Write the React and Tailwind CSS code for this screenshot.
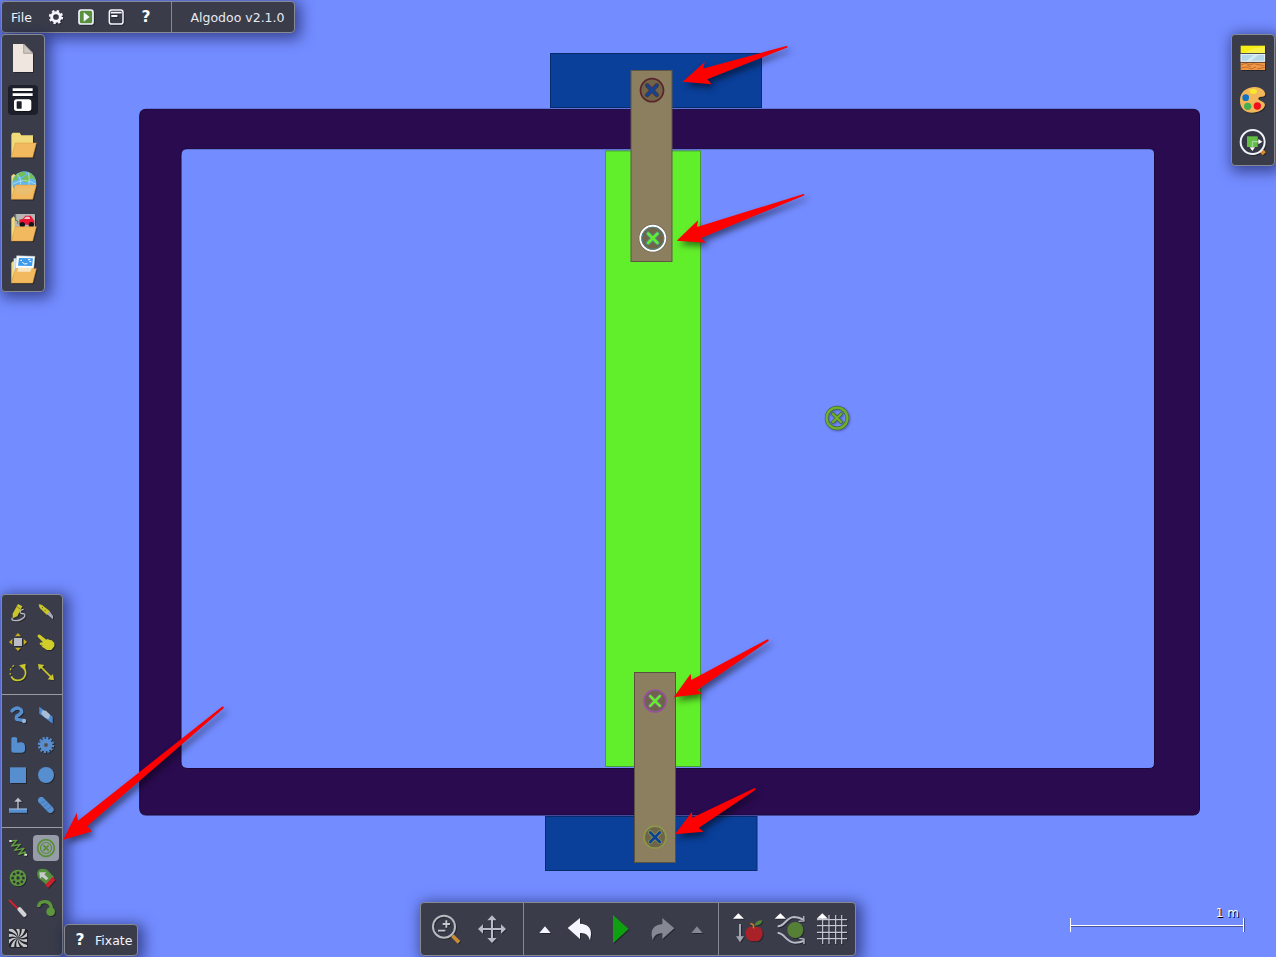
import React from 'react';

const panel =
  'absolute rounded-[4px] border border-[#868991] bg-[#3a3d49] shadow-[3px_3px_14px_3px_rgba(20,25,80,0.6)]';

function Icon({ box, w, h, flat, children }) {
  return (
    <svg
      width={w}
      height={h}
      viewBox={box}
      className={flat ? 'block shrink-0' : 'block shrink-0 drop-shadow-[1px_1px_0.5px_rgba(0,0,0,0.35)]'}
    >
      {children}
    </svg>
  );
}

function Screw({ x, y, r, ring, edge, fill, cross, size = 5, halo, ringWidth = 1.7 }) {
  const d = `M${x - size} ${y - size}L${x + size} ${y + size}M${x + size} ${y - size}L${x - size} ${y + size}`;
  return (
    <g>
      {edge && <circle cx={x} cy={y} r={r + 1} fill="none" stroke={edge} strokeWidth="1.4" />}
      <circle cx={x} cy={y} r={r} fill={fill} stroke={ring} strokeWidth={ringWidth} />
      <path d={d} stroke={halo} strokeWidth="4.4" strokeLinecap="round" />
      <path d={d} stroke={cross} strokeWidth="2.6" strokeLinecap="round" />
    </g>
  );
}

function Scene() {
  return (
    <svg className="absolute inset-0" width="1276" height="957" viewBox="0 0 1276 957" fill="none">
      <rect x="550.5" y="53.5" width="211" height="54" fill="#0a3f9a" stroke="#072c6d" />
      <rect x="545.5" y="816.5" width="211.5" height="54" fill="#0a3f9a" stroke="#072c6d" />
      <path
        fillRule="evenodd"
        fill="#2a0b50"
        stroke="#1c0838"
        d="M146 109.300H1193Q1199.500 109.300 1199.500 116V808Q1199.500 815 1193 815H146Q139.700 815 139.700 808V116Q139.700 109.300 146 109.300ZM187 148.700Q181 149 181 155V762Q181 768.500 188 768.500H1149Q1154.500 768.500 1154.500 763V154Q1154.500 148.700 1149 148.700Z"
      />
      <rect x="605.5" y="150.900" width="95" height="615.600" fill="#62ef2b" stroke="#459c33" />
      <rect x="631" y="70.500" width="41" height="191" fill="#8c7f5f" stroke="#5f5744" />
      <rect x="634.5" y="672.500" width="41" height="190" fill="#8c7f5f" stroke="#5a5241" />
      <Screw x={652} y={90.200} r={11.5} ring="#58262a" fill="#716448" cross="#154396" halo="#493440" size={4.8} />
      <Screw x={652.800} y={238.300} r={12.5} ring="#fff" edge="#706958" fill="#716448" cross="#62ef2b" halo="#539090" size={4.6} ringWidth={1.9} />
      <circle cx="652.8" cy="238.3" r="11" stroke="#4d898c" />
      <Screw x={655} y={701} r={11} ring="#94549c" fill="#6e624b" cross="#62ef2b" halo="#8b5b8d" size={4.8} />
      <Screw x={655} y={837.200} r={11} ring="#8c964c" fill="#6e644b" cross="#0a3f9a" halo="#84904b" size={4.8} />
      <g className="drop-shadow-[1px_1px_1px_rgba(20,25,80,0.4)]">
        <circle cx="837" cy="418" r="10.4" stroke="#466936" strokeWidth="3.600" />
        <circle cx="837" cy="418" r="10.4" stroke="#70b02d" strokeWidth="2.3" />
        <path d="m833 414 8 8m0-8-8 8" stroke="#466936" strokeWidth="3.8" strokeLinecap="round" />
        <path d="m833 414 8 8m0-8-8 8" stroke="#70b02d" strokeWidth="2.2" strokeLinecap="round" />
      </g>
    </svg>
  );
}

function Arrows() {
  return (
    <svg className="pointer-events-none absolute inset-0" width="1276" height="957" viewBox="0 0 1276 957" fill="#fe0000">
      <g className="drop-shadow-[3px_4px_3px_rgba(0,0,0,0.5)]">
        <path d="M682.700 81.700 704.700 62 703.300 68.400 786.300 46Q788.500 46 787.200 47.600L707.300 79.300 711.700 84.300Z" />
        <path d="M676.700 240.700 698 220.300 697 227 803.500 194Q805 194.300 804 195.400L701.300 238 705.700 242.700Z" />
        <path d="M673.700 697.300 690.700 673.700 691.300 680 767.500 639.300Q769.300 639.500 768.400 641L697.300 690 702 693.700Z" />
        <path d="M675 834.300 692 811.700 692.300 817.700 754.700 788Q756 788.500 755.500 789.700L698.700 828 703.700 831.700Z" />
        <path d="M63.300 839.700 76.700 813 78 820.700 222.300 706.500Q224.500 706.500 223.600 708.300L87.300 826 91.700 831.500Z" />
      </g>
    </svg>
  );
}

function FolderFront({ y }) {
  return <path d={`M46 ${y}H109L98 ${y + 43}H34Z`} fill="#f3b95e" stroke="#d99b43" strokeWidth="1.500" />;
}

function TopBar() {
  return (
    <header className={`${panel} left-px top-px flex h-8 w-[294px] items-stretch`}>
      <div className="flex w-[170px] items-center border-r border-[#868991] pl-[9px] text-[#f2f3fb]">
        <span className="w-[37px] pt-[2px] text-[12.5px]">File</span>
        <Icon box="144 24 48 54" w={16} h={18}>
          <circle cx="168" cy="51" r="13" fill="none" stroke="#f4f5ff" strokeWidth="9" />
          <circle cx="168" cy="51" r="18" fill="none" stroke="#f4f5ff" strokeWidth="7" strokeDasharray="7 7.137" />
        </Icon>
        <div className="w-[14px]" />
        <Icon box="234 24 48 54" w={16} h={18}>
          <rect x="237" y="30" width="42" height="42" rx="7" fill="#58903d" stroke="#f4f5ff" strokeWidth="5" />
          <path d="M251 37V65L269 51Z" fill="#f4f5ff" />
        </Icon>
        <div className="w-[14px]" />
        <Icon box="324 24 48 54" w={16} h={18}>
          <rect x="328" y="30" width="41" height="42" rx="7" fill="none" stroke="#f4f5ff" strokeWidth="4.500" />
          <path d="M332 38H365M334 48H352" stroke="#f4f5ff" strokeWidth="5.500" />
        </Icon>
        <div className="w-[14px]" />
        <span className="w-4 pt-px text-center text-[15.500px] font-bold text-white">?</span>
      </div>
      <div className="flex flex-1 items-center justify-center pl-[9px] pt-[2px] text-[12.500px] text-[#e9eaf3]">Algodoo v2.1.0</div>
    </header>
  );
}

function FileBar() {
  return (
    <nav className={`${panel} left-px top-[34px] flex h-[258px] w-11 flex-col items-center pt-[5px]`}>
      <Icon box="24 30 90 108" w={30} h={36}>
        <path d="M39 42H72L99 70V126H39Z" fill="#eee6df" />
        <path d="M71 42V70H99Z" fill="#cec6c1" stroke="#8e8985" strokeWidth="2" />
      </Icon>
      <div className="mt-[9px] flex h-[30px] w-[30px] items-center justify-center rounded-[4px] bg-[#1d202a]">
        <Icon box="24 165 90 90" w={30} h={30}>
          <path d="M38 179H98M38 194H98" stroke="#fff" strokeWidth="8" />
          <rect x="42" y="208" width="52" height="35" rx="8" fill="#fff" />
          <rect x="50" y="214" width="15" height="22" rx="2" fill="#1d202a" />
        </Icon>
      </div>
      <div className="mt-[11px] flex flex-col">
        <Icon box="24 287 90 126" w={30} h={42}>
          <path d="M34 380V313L38 307H59L64 315H99V345L85 380Z" fill="#f1da79" />
          <FolderFront y={338} />
        </Icon>
        <Icon box="24 413 90 126" w={30} h={42}>
          <path d="M34 506V437L40 431 60 440V470Z" fill="#f1da79" />
          <circle cx="73" cy="459" r="36" fill="#62b7ee" />
          <path d="M39 449Q49 424 72 424L80 431 67 438 54 441 49 452ZM83 424Q100 431 107 449L94 445ZM66 443 83 433 94 441 84 456 70 456Z" fill="#75bd55" />
          <path d="M38 462Q73 439 108 462M52 432Q66 448 60 466M86 427Q89 446 87 466" fill="none" stroke="#c9e9fa" strokeWidth="2" />
          <FolderFront y={464} />
          <path d="M44 468Q73 482 102 467L96 486Q73 501 48 489Z" fill="#e5c17c" opacity=".6" />
        </Icon>
        <Icon box="24 539 90 126" w={30} h={42}>
          <path d="M34 632V565L40 558 50 568V590Z" fill="#f1da79" />
          <rect x="44" y="551" width="61" height="45" rx="3" fill="#b7b7b5" />
          <path d="M47 552V571Q56 569 53 580" fill="none" stroke="#477843" strokeWidth="3" />
          <path d="M58 568 69 565 76 556H92L103 571V583H58Z" fill="#e91734" />
          <path d="M77 559H88L91 566H72Z" fill="#f5c4ce" />
          <circle cx="67" cy="583" r="8" fill="#14151a" />
          <circle cx="94" cy="583" r="8" fill="#14151a" />
          <FolderFront y={589} />
        </Icon>
        <Icon box="24 665 90 126" w={30} h={42}>
          <path d="M34 758V698L39 692 45 697V725Z" fill="#f1da79" />
          <path d="M41 684H95V725H41Z" fill="#dce6ed" />
          <path d="M50 676 105 678 101 716 46 714Z" fill="#f8fcff" stroke="#a8b7c3" strokeWidth="1.500" />
          <path d="M57 683 99 684 96 707 54 706Z" fill="#3d9bed" />
          <path d="M61 690H66M84 688H91M88 694H94M67 695 73 701 82 700" fill="none" stroke="#fff" strokeWidth="3" />
          <FolderFront y={715} />
          <path d="M54 712H96L91 724H52Z" fill="#f8e4bf" />
        </Icon>
      </div>
    </nav>
  );
}

function OptionsBar() {
  return (
    <nav className={`${panel} left-[1231px] top-[34px] flex h-[132px] w-11 flex-col items-center pt-[2px]`}>
      <Icon box="66 36 90 126" w={30} h={42}>
        <rect x="74" y="62" width="73" height="22" fill="#f7ee16" />
        <path d="M85 84 112 70 147 66V84Z" fill="#f9f14a" />
        <rect x="75" y="88" width="71" height="21" fill="#b3d6e8" stroke="#f6fbff" strokeWidth="3" />
        <path d="M91 108 114 89H128L105 108Z" fill="#d4e9f2" />
        <rect x="74" y="113" width="73" height="22" fill="#f19743" />
        <path d="M75 120 88 115 101 119 115 116M75 129 92 126 105 132 120 126M118 117 143 122M123 132 146 127M94 121 105 125" fill="none" stroke="#a35a27" strokeWidth="2" />
      </Icon>
      <Icon box="66 162 90 126" w={30} h={42}>
        <path d="M113 186C138 184 151 202 147 211C143 218 128 213 127 221C127 227 147 229 147 240C144 254 127 263 108 263C84 263 71 247 72 225C73 202 89 188 113 186Z" fill="#f2b65b" />
        <ellipse cx="112" cy="199" rx="11" ry="8" fill="#f8e82f" />
        <circle cx="89" cy="218" r="10" fill="#1171c4" />
        <circle cx="95" cy="244" r="11" fill="#45ad52" />
        <circle cx="124" cy="243" r="11" fill="#f10f1c" />
      </Icon>
      <Icon box="66 287 90 126" w={30} h={42}>
        <path d="m132 372 13 13" stroke="#dc8a27" strokeWidth="13" />
        <circle cx="110" cy="350" r="36" fill="#343743" stroke="#eff2f8" strokeWidth="6" />
        <rect x="93" y="333" width="32" height="32" fill="#62bf43" />
        <path d="M109 365V349H130" fill="none" stroke="#b9d6b7" strokeWidth="3" />
        <path d="M127 341V357L139 349ZM101 366H117L109 377Z" fill="#fff" />
      </Icon>
    </nav>
  );
}

function Tool({ box, active, children }) {
  return (
    <div className="flex h-[30px] w-7 items-center justify-center">
      <div className={active ? 'flex h-[26px] w-[26px] items-center justify-center rounded-[4px] bg-[#989ba8]' : 'flex'}>
        <Icon box={box} w={28} h={30} flat={active}>{children}</Icon>
      </div>
    </div>
  );
}

function ToolBox() {
  const group = 'grid grid-cols-2 px-[2px]';
  return (
    <aside className={`${panel} left-px top-[594px] flex h-[362px] w-[62px] flex-col`}>
      <div className={`${group} h-[100px] content-start border-b border-[#9a9ca3] pt-[2px]`}>
        <Tool box="12 36 84 90">
          <path d="M71 73Q59 75 60 82Q62 87 70 86Q77 88 73 96Q61 108 45 107Q32 106 37 99" fill="none" stroke="#b5b7bf" strokeWidth="4" />
          <path d="M54 57 67 64 52 94 38 100 38 86Z" fill="#cbc72b" />
          <path d="m50 65 11 7" stroke="#62632d" strokeWidth="2" />
        </Tool>
        <Tool box="96 36 84 90">
          <path d="M116 58 125 59 150 79 141 90 119 69Z" fill="#cbc72b" />
          <path d="M149 79 159 93V103L141 88Z" fill="#a7abb7" />
          <path d="M126 68h3M134 76h3" stroke="#595b2d" strokeWidth="3" />
        </Tool>
        <Tool box="12 126 84 90">
          <rect x="42" y="159" width="24" height="24" fill="#babdc8" />
          <path d="M54 144 63 154H45ZM54 198 63 188H45ZM27 171 37 162V180ZM81 171 71 162V180Z" fill="#c9ae1d" />
        </Tool>
        <Tool box="96 126 84 90">
          <path d="M113 151Q117 146 122 151L139 164Q143 160 148 165L155 166 163 174V184L154 195H141L128 187 123 181 132 181 120 179 119 173 129 172 113 155Z" fill="#d0cd2a" />
        </Tool>
        <Tool box="12 216 84 90">
          <path d="M34 274Q39 286 53 286Q71 285 76 269Q79 257 70 246" fill="none" stroke="#cbc72b" strokeWidth="5" />
          <path d="M31 269V264M31 256 33 250M37 245 42 241" stroke="#b5b22e" strokeWidth="4" />
          <path d="M57 241 77 236 75 257Z" fill="#cbc72b" />
        </Tool>
        <Tool box="96 216 84 90">
          <path d="M119 242 157 280" stroke="#cbc72b" strokeWidth="5" />
          <path d="M114 237 133 240 117 255ZM162 286 143 283 159 267Z" fill="#cbc72b" />
        </Tool>
      </div>
      <div className={`${group} h-[133px] content-start border-b border-[#9a9ca3] pt-[5px]`}>
        <Tool box="12 345 84 90">
          <path d="M36 378Q43 369 54 369Q66 372 65 382Q60 389 50 394Q45 405 56 404L72 407" fill="none" stroke="#568ed0" strokeWidth="10" strokeLinecap="round" />
          <circle cx="72" cy="408" r="6.500" fill="#92b5df" />
        </Tool>
        <Tool box="96 345 84 90">
          <path d="M118 365 158 395V416L118 386Z" fill="#4f8bd0" />
          <path d="M127 376 138 377 151 390 145 403 134 397 124 386Z" fill="#a9bed5" />
        </Tool>
        <Tool box="12 435 84 90">
          <path d="M34 463Q34 456 42 456Q52 456 52 463V473Q75 468 75 485V496Q74 503 66 503H42Q34 503 34 495Z" fill="#568ed0" />
        </Tool>
        <Tool box="96 435 84 90">
          <circle cx="138" cy="480" r="19" fill="#568ed0" />
          <circle cx="138" cy="480" r="21" fill="none" stroke="#568ed0" strokeWidth="7" strokeDasharray="6.500 4.495" />
          <circle cx="138" cy="480" r="6" fill="#424c5a" stroke="#806d60" strokeWidth="2" />
        </Tool>
        <Tool box="12 525 84 90"><rect x="30" y="547" width="48" height="47" fill="#568ed0" /></Tool>
        <Tool box="96 525 84 90"><circle cx="138" cy="570" r="24" fill="#568ed0" /></Tool>
        <Tool box="12 60 84 90">
          <path d="M27 122.500H81" stroke="#568ed0" strokeWidth="12" />
          <path d="M27 117H81" stroke="#a2bddd" strokeWidth="3" />
          <path d="M54 117V90" stroke="#bfc3ce" strokeWidth="4" />
          <path d="M43 95 54 83 66 95Z" fill="#bfc3ce" />
        </Tool>
        <Tool box="96 60 84 90">
          <path d="M124 91 151 119" stroke="#568ed0" strokeWidth="20" strokeLinecap="round" />
          <path d="M121 101 136 92M130 111 145 100M139 121 154 109" stroke="#3d6ca6" strokeWidth="2" />
        </Tool>
      </div>
      <div className={`${group} content-start pt-[5px]`}>
        <Tool box="12 189 84 90">
          <path d="M32 213 50 211 35 228 61 223 44 241 72 235 56 253 76 246 73 258" fill="none" stroke="#64a03f" strokeWidth="4" strokeLinejoin="round" />
          <path d="M28 210h7v6h-7zM74 251h7v6h-7z" fill="#dadde3" />
        </Tool>
        <Tool box="96 189 84 90" active>
          <circle cx="138" cy="234" r="25" fill="none" stroke="#548f33" strokeWidth="5" />
          <circle cx="138" cy="234" r="16.500" fill="none" stroke="#548f33" strokeWidth="3.500" />
          <path d="m130 226 16 16m0-16-16 16" stroke="#548f33" strokeWidth="5" />
        </Tool>
        <Tool box="12 279 84 90">
          <circle cx="54" cy="324" r="25" fill="#5d963d" />
          <g fill="#2d3538">
            <circle cx="54" cy="308" r="4.500" /><circle cx="54" cy="340" r="4.500" /><circle cx="38" cy="324" r="4.500" /><circle cx="70" cy="324" r="4.500" />
            <circle cx="42.500" cy="312.500" r="4" /><circle cx="65.500" cy="312.500" r="4" /><circle cx="42.500" cy="335.500" r="4" /><circle cx="65.500" cy="335.500" r="4" />
            <circle cx="54" cy="324" r="5" />
          </g>
        </Tool>
        <Tool box="96 279 84 90">
          <path d="M116 299Q127 293 141 299L163 322 140 345 116 325Q107 311 116 299Z" fill="#54903d" />
          <path d="m158 320 8 10-22 24-8-10Z" fill="#cd202e" />
          <path d="M118 307H139L133 313 145 325 139 331 126 320 120 326Z" fill="#c6cbc9" />
        </Tool>
        <Tool box="12 369 84 90">
          <path d="m27 390 32 31" stroke="#d8222d" strokeWidth="5.500" />
          <path d="m59 418 14 16" stroke="#d1d1d6" strokeWidth="13" strokeLinecap="round" />
        </Tool>
        <Tool box="96 369 84 90">
          <path d="M116 411Q116 395 135 395Q153 395 155 418" fill="none" stroke="#5d963d" strokeWidth="10" />
          <circle cx="152" cy="425" r="13" fill="#5d963d" />
        </Tool>
        <Tool box="12 459 84 90">
          <clipPath id="swirl"><rect x="27" y="477" width="54" height="54" /></clipPath>
          <g clipPath="url(#swirl)">
            <rect x="27" y="477" width="54" height="54" fill="#22242a" />
            {[0, 36, 72, 108, 144, 180, 216, 252, 288, 324].map((a) => (
              <path key={a} d="M54 504Q68 493 65 464L77 468Q75 495 54 504Z" fill="#c6c7cb" transform={`rotate(${a} 54 504)`} />
            ))}
          </g>
        </Tool>
      </div>
    </aside>
  );
}

function ControlBar() {
  return (
    <footer className={`${panel} left-[420px] top-[902px] flex h-[54px] w-[436px] items-stretch`}>
      <div className="flex w-[103px] gap-1 border-r border-[#868991] pl-1">
        <Icon box="45 39 126 156" w={42} h={52}>
          <path d="m127 137 20 20" stroke="#ca8b36" strokeWidth="11" />
          <circle cx="102" cy="110" r="33" fill="none" stroke="#b9bbc3" strokeWidth="6" />
          <path d="M98 102H120M109 91V113M84 122H106" stroke="#c5c7cf" strokeWidth="5.500" />
        </Icon>
        <Icon box="183 39 126 156" w={42} h={52}>
          <path d="M246 89V146M217 117H275" stroke="#b9bcc8" strokeWidth="6" />
          <path d="M246 76 260 91H232ZM246 159 260 144H232ZM204 117 219 103V131ZM288 117 273 103V131Z" fill="#b9bcc8" />
        </Icon>
      </div>
      <div className="flex w-[195px] justify-between border-r border-[#868991] pl-[9px] pr-[9px]">
        <Icon box="369 39 72 156" w={24} h={52}><path d="M388 129 405 109 422 129Z" fill="#f4f5ff" /></Icon>
        <Icon box="450 39 120 156" w={40} h={52}>
          <path d="M473 114 510 84V101Q544 103 543 133L540 151Q534 127 510 129V147Z" fill="#f4f5ff" />
        </Icon>
        <Icon box="579 39 108 156" w={36} h={52}><path d="M609 75V160L656 117Z" fill="#0fa011" /></Icon>
        <Icon box="6 39 120 156" w={40} h={52}>
          <path d="M103 115 67 84V102Q32 105 35 136L38 151Q44 129 67 130V147Z" fill="#858892" />
        </Icon>
        <Icon box="135 39 72 156" w={24} h={52}><path d="M154 129 171 109 188 129Z" fill="#858892" /></Icon>
      </div>
      <div className="flex gap-[2px] pl-2">
        <Icon box="261 39 120 156" w={40} h={52}>
          <path d="M279 86 295 70 312 86Z" fill="#fff" />
          <path d="M300 102V143" stroke="#a2a5af" strokeWidth="6" />
          <path d="M288 139H312L300 157Z" fill="#a2a5af" />
          <path d="M342 113C357 105 369 116 368 132C366 148 357 157 342 153C327 158 317 145 317 130C317 114 330 106 342 113Z" fill="#aa2229" />
          <path d="M341 115Q342 101 331 101" fill="none" stroke="#d47827" strokeWidth="5" />
          <path d="M343 107Q349 90 367 91Q364 107 343 107Z" fill="#538637" />
        </Icon>
        <Icon box="387 39 120 156" w={40} h={52}>
          <path d="M404 86 421 70 438 86Z" fill="#fff" />
          <circle cx="466" cy="120" r="24" fill="#558036" />
          <path d="M413 109C435 110 437 82 462 81Q477 81 490 89M413 129C434 128 438 158 465 158Q479 158 491 153" fill="none" stroke="#b9bcc8" strokeWidth="6" />
          <path d="m491 78 1 15-16 1M478 145l14 2v15" fill="none" stroke="#b9bcc8" strokeWidth="4" />
        </Icon>
        <Icon box="513 39 120 156" w={40} h={52}>
          <path d="M531 89H621M531 107H621M531 127H621M531 146H621M548 75V162M567 75V162M587 75V162M605 75V162" stroke="#c5c8d5" strokeWidth="3.500" />
          <path d="M530 86 547 70 564 86Z" fill="#fff" />
        </Icon>
      </div>
    </footer>
  );
}

export default function App() {
  return (
    <main className="relative h-[957px] w-[1276px] overflow-hidden bg-[#738cff] font-['DejaVu_Sans',sans-serif]">
      <Scene />
      <TopBar />
      <FileBar />
      <OptionsBar />
      <ToolBox />
      <div className={`${panel} left-[64px] top-[924px] flex h-8 w-[74px] items-center pt-[2px] text-[#f2f3fb]`}>
        <span className="ml-2 w-[14px] text-center text-[15.500px] font-bold text-white">?</span>
        <span className="ml-2 text-[12.500px]">Fixate</span>
      </div>
      <ControlBar />
      <div className="absolute left-[1070px] top-[905px] w-[174px]">
        <div className="pr-[5px] text-right text-[12px] leading-4 text-white [text-shadow:1px_1px_0_#000]">1 m</div>
        <div className="-mt-[3px] flex h-[14px] items-center border-x border-white shadow-[1px_0_0_#48549b]">
          <div className="h-px w-full bg-white shadow-[0_1px_0_#48549b]" />
        </div>
      </div>
      <Arrows />
    </main>
  );
}
